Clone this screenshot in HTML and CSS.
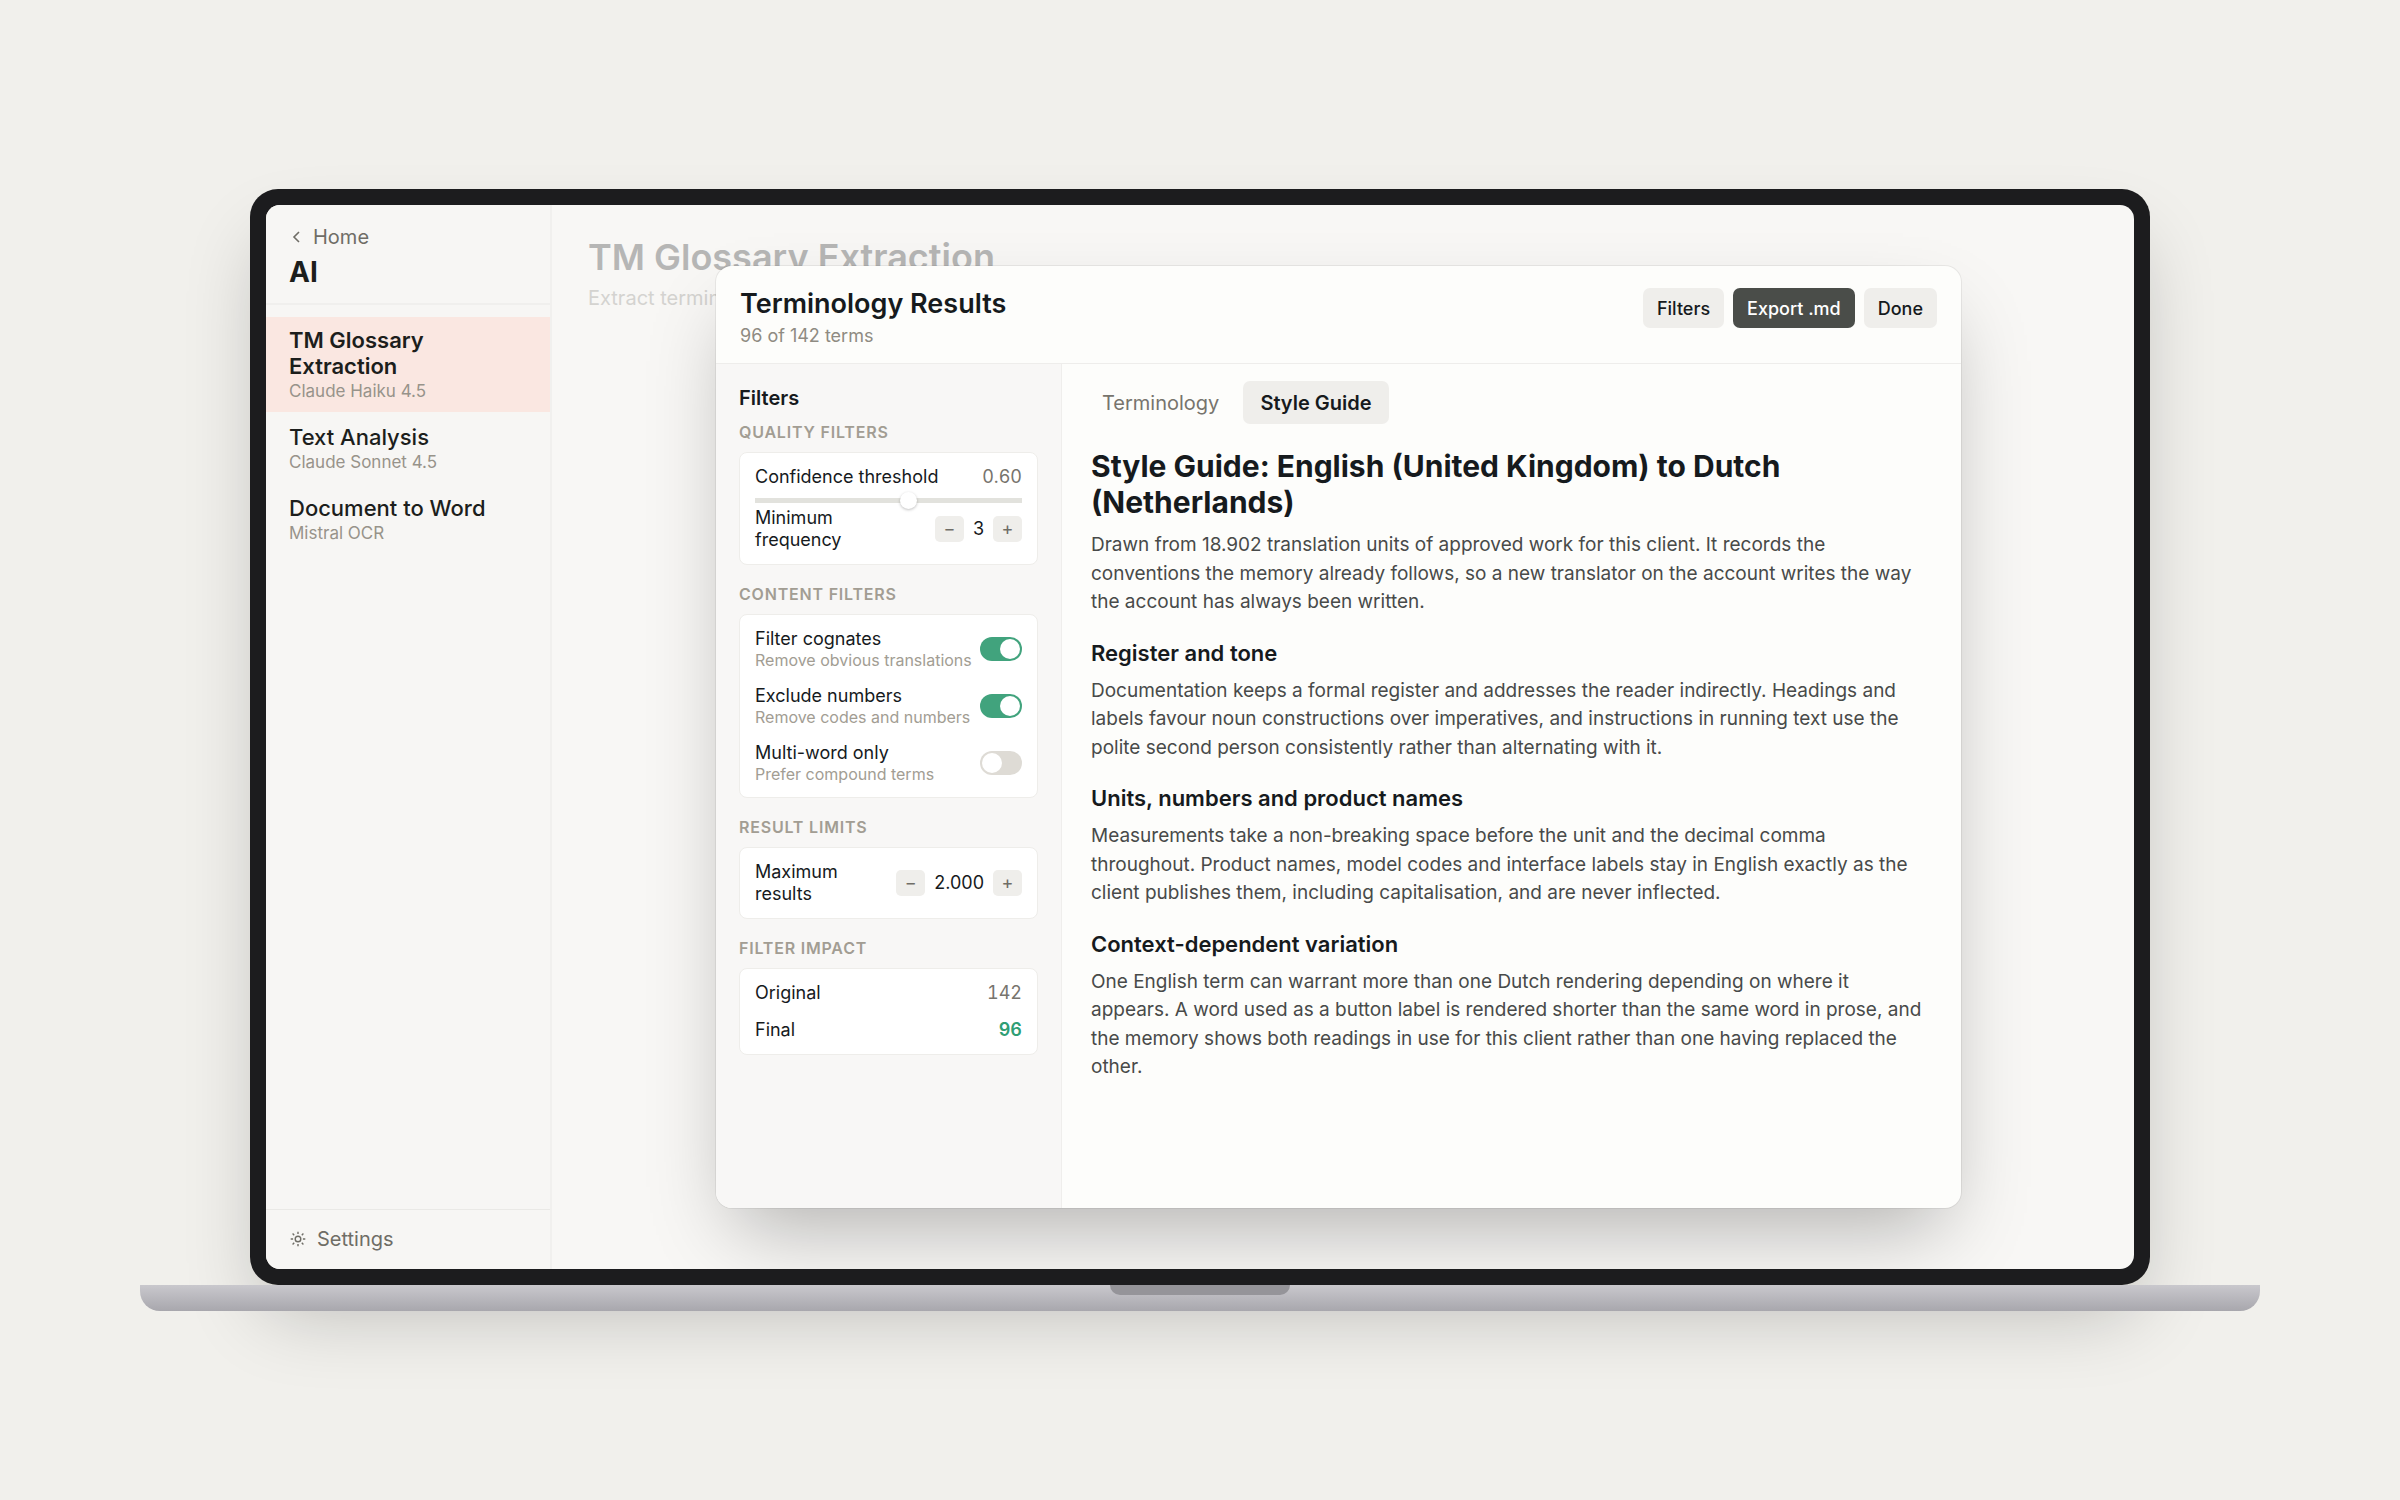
FILE: index.html
```html
<!DOCTYPE html>
<html lang="en">
<head>
  <meta charset="UTF-8" />
  <meta name="viewport" content="width=device-width, initial-scale=1" />
  <title>Terminology Results</title>
  <link rel="stylesheet" href="styles.css">
</head>
<body>
  <div class="laptop">
    <div class="lid">
      <div class="screen">

        <!-- Sidebar -->
        <aside class="sidebar">
          <div class="sidebar-header">
            <a class="side-link home" href="#">
              <svg width="16" height="16" viewBox="0 0 16 16" fill="none" stroke="currentColor" stroke-width="1.6"><path d="M10 3 5 8l5 5"/></svg>
              Home
            </a>
            <div class="sidebar-title">AI</div>
          </div>
          <nav class="tools">
            <a class="tool active" href="#">
              <span class="tool-name">TM Glossary Extraction</span>
              <span class="tool-model">Claude Haiku 4.5</span>
            </a>
            <a class="tool" href="#">
              <span class="tool-name">Text Analysis</span>
              <span class="tool-model">Claude Sonnet 4.5</span>
            </a>
            <a class="tool" href="#">
              <span class="tool-name">Document to Word</span>
              <span class="tool-model">Mistral OCR</span>
            </a>
          </nav>
          <div class="sidebar-footer">
            <a class="side-link settings" href="#">
              <svg width="18" height="18" viewBox="0 0 18 18" fill="none" stroke="currentColor" stroke-width="1.4">
                <circle cx="9" cy="9" r="2.8"/>
                <path d="M9 1.7v2.4M9 13.9v2.4M1.7 9h2.4M13.9 9h2.4M3.6 3.6l1.6 1.6M12.8 12.8l1.6 1.6M3.6 14.4l1.6-1.6M12.8 5.2l1.6-1.6"/>
              </svg>
              Settings
            </a>
          </div>
        </aside>

        <main class="main">
          <div class="page-title">TM Glossary Extraction</div>
          <div class="page-subtitle">Extract terminology</div>

          <!-- Results modal -->
          <section class="modal">
            <header class="modal-header">
              <div>
                <div class="modal-title">Terminology Results</div>
                <div class="modal-subtitle">96 of 142 terms</div>
              </div>
              <div class="actions">
                <button class="btn">Filters</button>
                <button class="btn btn-dark">Export .md</button>
                <button class="btn">Done</button>
              </div>
            </header>

            <div class="modal-body">
              <div class="filters">
                <div class="filters-title">Filters</div>

                <div class="group-label">QUALITY FILTERS</div>
                <div class="card">
                  <div class="row">
                    <label for="confidence">Confidence threshold</label>
                    <span class="value">0.60</span>
                  </div>
                  <input class="slider" id="confidence" type="range" min="0" max="1" step="0.01" value="0.58">
                  <div class="row">
                    <span>Minimum frequency</span>
                    <div class="stepper">
                      <button>−</button>
                      <span>3</span>
                      <button>+</button>
                    </div>
                  </div>
                </div>

                <div class="group-label">CONTENT FILTERS</div>
                <div class="card toggles">
                  <label class="row">
                    <span>Filter cognates<small>Remove obvious translations</small></span>
                    <input class="toggle" type="checkbox" checked>
                  </label>
                  <label class="row">
                    <span>Exclude numbers<small>Remove codes and numbers</small></span>
                    <input class="toggle" type="checkbox" checked>
                  </label>
                  <label class="row">
                    <span>Multi-word only<small>Prefer compound terms</small></span>
                    <input class="toggle" type="checkbox">
                  </label>
                </div>

                <div class="group-label">RESULT LIMITS</div>
                <div class="card">
                  <div class="row">
                    <span>Maximum results</span>
                    <div class="stepper">
                      <button>−</button>
                      <span>2.000</span>
                      <button>+</button>
                    </div>
                  </div>
                </div>

                <div class="group-label">FILTER IMPACT</div>
                <div class="card impact">
                  <div class="row">
                    <span>Original</span>
                    <span class="value">142</span>
                  </div>
                  <div class="row">
                    <span>Final</span>
                    <span class="value final">96</span>
                  </div>
                </div>
              </div>

              <div class="content">
                <div class="tabs">
                  <button class="tab">Terminology</button>
                  <button class="tab selected">Style Guide</button>
                </div>
                <article class="guide">
                  <h1>Style Guide: English (United Kingdom) to Dutch (Netherlands)</h1>
                  <p>Drawn from 18.902 translation units of approved work for this client. It records the conventions the memory already follows, so a new translator on the account writes the way the account has always been written.</p>
                  <h2>Register and tone</h2>
                  <p>Documentation keeps a formal register and addresses the reader indirectly. Headings and labels favour noun constructions over imperatives, and instructions in running text use the polite second person consistently rather than alternating with it.</p>
                  <h2>Units, numbers and product names</h2>
                  <p>Measurements take a non-breaking space before the unit and the decimal comma throughout. Product names, model codes and interface labels stay in English exactly as the client publishes them, including capitalisation, and are never inflected.</p>
                  <h2>Context-dependent variation</h2>
                  <p>One English term can warrant more than one Dutch rendering depending on where it appears. A word used as a button label is rendered shorter than the same word in prose, and the memory shows both readings in use for this client rather than one having replaced the other.</p>
                </article>
              </div>
            </div>
          </section>
        </main>

      </div>
    </div>
    <div class="base"><div class="notch"></div></div>
  </div>
</body>
</html>
```
FILE: styles.css
```css
* {
  box-sizing: border-box;
}

body {
  margin: 0;
  min-height: 100vh;
  display: flex;
  justify-content: center;
  align-items: center;
  background: #f1f0ec;
  color: #161a1d;
  font-family: Inter, "Liberation Sans", sans-serif;
  font-size: 19px;
}

a {
  color: inherit;
  text-decoration: none;
}

button {
  border: none;
  padding: 0;
  font: inherit;
  color: inherit;
  cursor: pointer;
}

/* Laptop */
.laptop {
  width: calc(100% - 280px);
}

.lid {
  margin: 0 110px;
  padding: 16px;
  aspect-ratio: 1900 / 1096;
  background: #1c1c1e;
  border-radius: 28px;
  box-shadow: 0 40px 80px -16px rgba(0, 0, 0, 0.24);
}

.screen {
  display: flex;
  height: 100%;
  background: #f8f7f5;
  border-radius: 14px;
  overflow: hidden;
}

.base {
  position: relative;
  height: 26px;
  background: linear-gradient(#c9c8cd, #a8a7ad);
  border-radius: 0 0 20px 20px;
}

.notch {
  width: 180px;
  height: 10px;
  margin: 0 auto;
  background: #959499;
  border-radius: 0 0 10px 10px;
}

/* Sidebar */
.sidebar {
  display: flex;
  flex-direction: column;
  flex: 0 0 286px;
  background: #f7f6f4;
  border-right: 2px solid #f1f0ee;
}

.sidebar-header {
  padding: 20px 23px 15px;
  border-bottom: 2px solid #f0efed;
}

.side-link {
  display: flex;
  align-items: center;
  font-size: 20px;
  line-height: 24px;
  color: #6f6d66;
}

.home {
  gap: 8px;
}

.settings {
  gap: 10px;
}

.sidebar-title {
  margin-top: 7px;
  font-size: 28px;
  font-weight: 700;
  line-height: 32px;
  color: #1c1e1c;
}

.tools {
  display: flex;
  flex-direction: column;
  gap: 2px;
  padding-top: 12px;
}

.tool {
  display: flex;
  flex-direction: column;
  padding: 10px 23px;
}

.tool.active {
  background: #fae7e1;
}

.tool-name {
  font-size: 22px;
  font-weight: 500;
  line-height: 26px;
  color: #1c1e1c;
}

.active .tool-name {
  font-weight: 600;
}

.tool-model {
  margin-top: 1px;
  font-size: 17px;
  line-height: 22px;
  color: #97938a;
}

.sidebar-footer {
  margin-top: auto;
  padding: 17px 23px 18px;
  border-top: 1px solid #eae9e6;
}

/* Page behind the modal */
.main {
  position: relative;
  flex: 1;
  padding: 29px 36px;
}

.page-title {
  font-size: 36px;
  font-weight: 600;
  line-height: 46px;
  color: #b6b6b5;
}

.page-subtitle {
  margin-top: 5px;
  font-size: 20px;
  line-height: 26px;
  color: #d4d3d0;
}

/* Modal */
.modal {
  position: absolute;
  inset: 61px 173px 61px 164px;
  display: flex;
  flex-direction: column;
  background: #fdfdfb;
  border-radius: 16px;
  box-shadow: 0 0 0 1px rgba(0, 0, 0, 0.06), 0 37px 78px -19px rgba(0, 0, 0, 0.29);
  overflow: hidden;
}

.modal-header {
  display: flex;
  justify-content: space-between;
  align-items: flex-start;
  padding: 22px 24px 15px;
  border-bottom: 1px solid #eeedeb;
}

.modal-title {
  font-size: 27px;
  font-weight: 600;
  line-height: 32px;
}

.modal-subtitle {
  margin-top: 4px;
  font-size: 18px;
  line-height: 24px;
  color: #8f8b82;
}

.actions {
  display: flex;
  gap: 9px;
}

.btn {
  height: 40px;
  padding: 0 14px;
  background: #efeeeb;
  border-radius: 7px;
  font-size: 18px;
  font-weight: 500;
}

.btn-dark {
  background: #4a4d49;
  color: #fff;
}

.modal-body {
  display: flex;
  flex: 1;
}

/* Filters */
.filters {
  flex: 0 0 346px;
  padding: 22px 23px;
  background: #f8f7f6;
  border-right: 1px solid #efeeec;
}

.filters-title {
  margin-bottom: 12px;
  font-size: 20px;
  font-weight: 600;
  line-height: 24px;
}

.group-label {
  margin-bottom: 10px;
  font-size: 16px;
  font-weight: 600;
  line-height: 20px;
  letter-spacing: 0.05em;
  color: #a29d93;
}

.card {
  margin-bottom: 19px;
  padding: 13px 15px;
  background: #fff;
  border: 1px solid #eeedea;
  border-radius: 8px;
  font-size: 18px;
  line-height: 22px;
}

.row {
  display: flex;
  justify-content: space-between;
  align-items: center;
}

.row small {
  display: block;
  font-size: 16px;
  line-height: 20px;
  color: #a29d93;
}

.value {
  font-variant-numeric: tabular-nums;
  color: #77746d;
}

.value.final {
  font-weight: 600;
  color: #2f9e74;
}

.toggles,
.impact {
  display: flex;
  flex-direction: column;
  gap: 15px;
}

.slider {
  appearance: none;
  display: block;
  width: 100%;
  height: 14px;
  margin: 5px 0 0;
  background: linear-gradient(#e2e2dd, #e2e2dd) center / 100% 5px no-repeat;
}

.slider::-webkit-slider-thumb {
  appearance: none;
  width: 17px;
  height: 17px;
  background: #fff;
  border-radius: 50%;
  box-shadow: 0 1px 3px rgba(0, 0, 0, 0.25);
}

.stepper {
  display: flex;
  align-items: center;
  gap: 9px;
  margin-left: 16px;
}

.stepper button {
  width: 29px;
  height: 26px;
  background: #efeeeb;
  border-radius: 5px;
  font-size: 18px;
  color: #6f6d66;
}

.toggle {
  appearance: none;
  flex: none;
  width: 42px;
  height: 24px;
  margin: 0;
  padding: 2px;
  background: #dedbd5;
  border-radius: 12px;
}

.toggle::before {
  content: "";
  display: block;
  width: 20px;
  height: 20px;
  background: #fff;
  border-radius: 50%;
}

.toggle:checked {
  background: #41a37d;
}

.toggle:checked::before {
  margin-left: auto;
}

/* Style guide */
.content {
  flex: 1;
  padding: 17px 23px;
}

.tabs {
  display: flex;
  gap: 7px;
}

.tab {
  height: 43px;
  padding: 0 17px;
  background: none;
  border-radius: 7px;
  font-size: 20px;
  color: #77746d;
}

.tab.selected {
  background: #efeeeb;
  font-weight: 600;
  color: #161a1d;
}

.guide {
  padding: 24px 6px 0;
}

h1 {
  margin: 0 0 11px;
  font-size: 30px;
  font-weight: 700;
  line-height: 36px;
}

h2 {
  margin: 22px 0 10px;
  font-size: 22px;
  font-weight: 600;
  line-height: 28px;
}

p {
  margin: 0;
  line-height: 1.5;
  color: #484a49;
}
```
